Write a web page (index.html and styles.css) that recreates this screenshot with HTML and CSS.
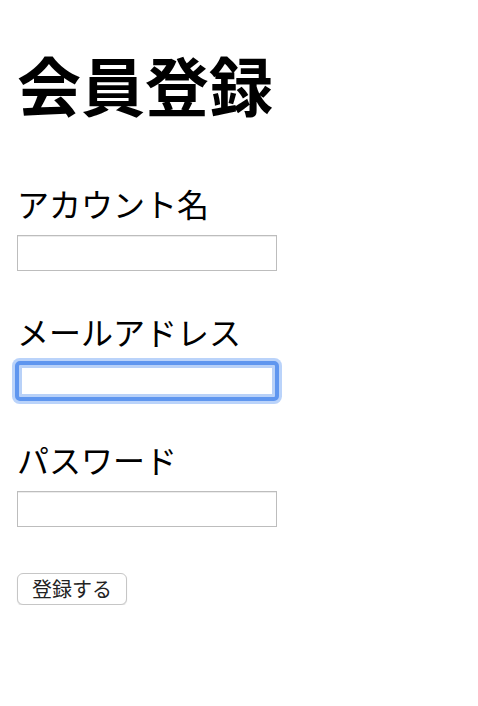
FILE: index.html
```html
<!DOCTYPE html>
<html lang="ja">
<head>
<meta charset="utf-8">
<title>会員登録</title>
<link rel="stylesheet" href="styles.css">
</head>
<body>
<main class="page">
  <h1 class="title">会員登録</h1>
  <form class="form">
    <div class="field">
      <label class="label" for="name">アカウント名</label>
      <input class="input" id="name" type="text">
    </div>
    <div class="field">
      <label class="label" for="mail">メールアドレス</label>
      <input class="input is-focused" id="mail" type="email">
    </div>
    <div class="field">
      <label class="label" for="pass">パスワード</label>
      <input class="input" id="pass" type="password">
    </div>
    <button class="button" type="button">登録する</button>
  </form>
</main>
</body>
</html>
```

FILE: styles.css
```css
html, body {
  margin: 0;
  padding: 0;
  background: #ffffff;
}

body {
  font-family: "Noto Sans CJK JP", "Noto Sans", sans-serif;
  color: #000000;
}

.page {
  padding: 47px 17px 0;
}

.title {
  margin: 0;
  font-size: 64px;
  line-height: 72px;
  font-weight: 700;
}

.form {
  margin-top: 64px;
  display: flex;
  flex-direction: column;
  align-items: flex-start;
}

.field {
  display: flex;
  flex-direction: column;
  align-items: flex-start;
  gap: 12px;
  margin-bottom: 40px;
}

.label {
  font-size: 32px;
  line-height: 40px;
  font-weight: 400;
}

.input {
  box-sizing: border-box;
  width: 260px;
  height: 36px;
  margin: 0;
  padding: 0 4px;
  border: 1px solid #bdbdbd;
  border-radius: 0;
  background: #ffffff;
  box-shadow: inset 0 1px 0 #ececec;
  font-size: 20px;
  font-family: inherit;
  outline: none;
}

.input.is-focused {
  border-color: #9fc1f6;
  outline: 4px solid #5f96ef;
  outline-offset: -2px;
  border-radius: 3px;
  box-shadow: 0 0 0 5px rgba(140, 182, 246, 0.6), inset 0 0 0 4px #b8d1f8;
}

.button {
  margin-top: 6px;
  box-sizing: border-box;
  width: 110px;
  height: 32px;
  padding: 0;
  border: 1px solid #c6c6c6;
  border-radius: 6px;
  background: #ffffff;
  box-shadow: 0 1px 1px rgba(0, 0, 0, 0.12);
  font-family: "Noto Sans CJK JP", sans-serif;
  font-size: 20px;
  line-height: 30px;
  color: #222222;
}
```
